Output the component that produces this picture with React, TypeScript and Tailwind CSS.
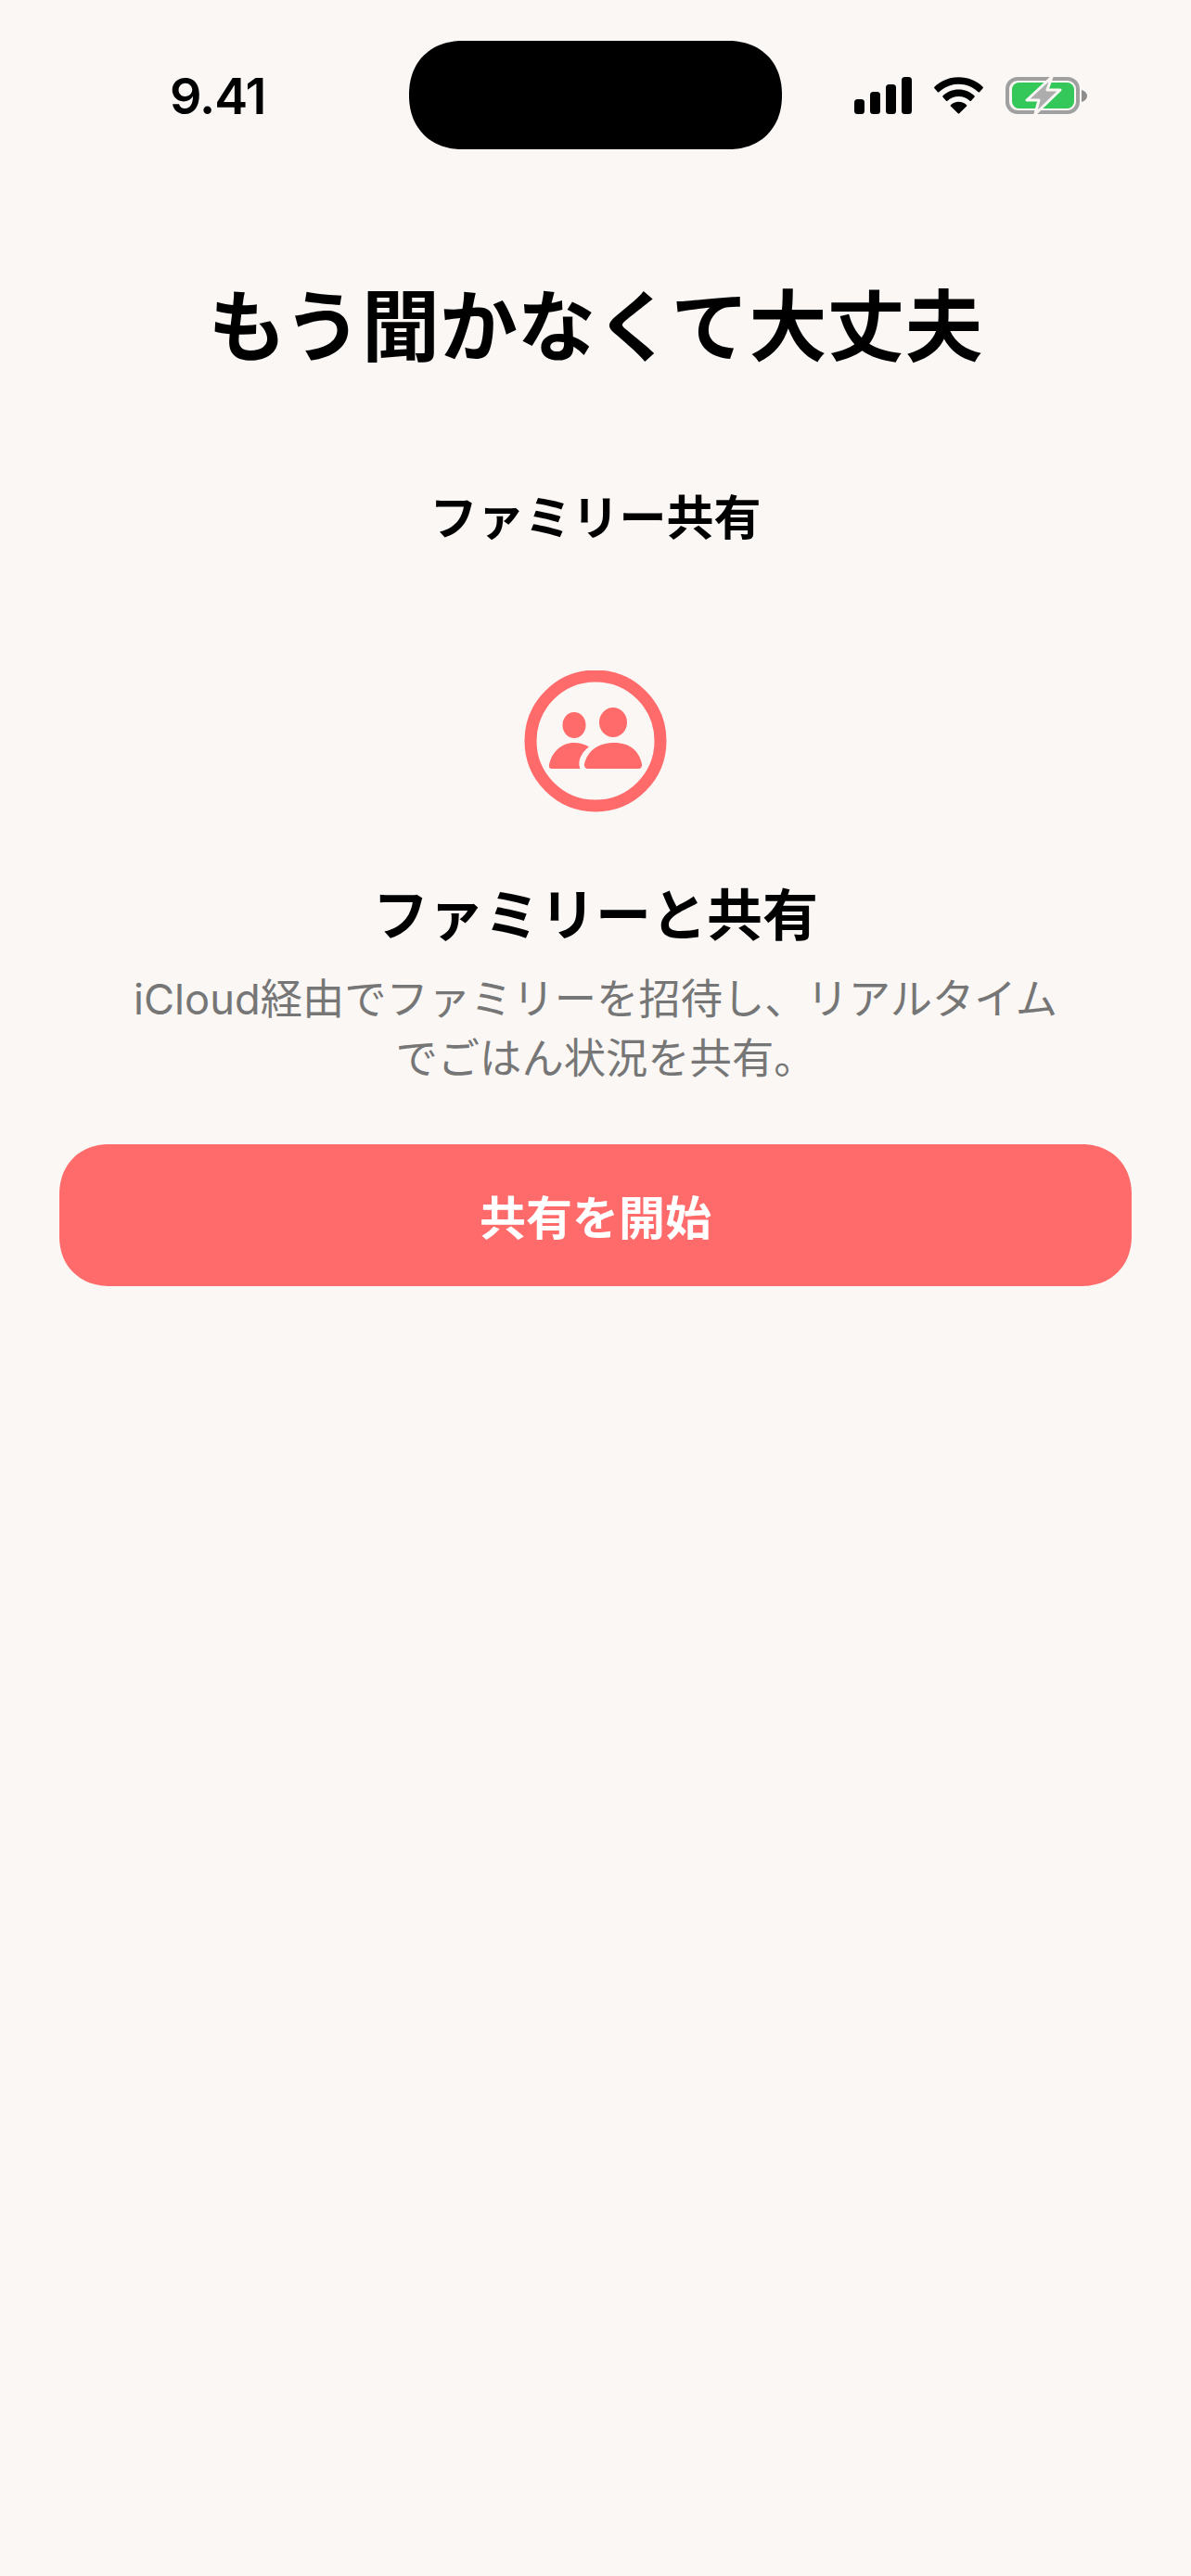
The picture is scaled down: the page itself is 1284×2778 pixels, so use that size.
const cjk = "font-['Noto_Sans_CJK_JP','Inter',sans-serif]";

function CellIcon() {
  return (
    <svg width="62" height="40" viewBox="0 0 62 40" fill="#000">
      <rect x="0" y="24" width="11" height="16" rx="3.5" />
      <rect x="17" y="16" width="11" height="24" rx="3.5" />
      <rect x="34" y="8" width="11" height="32" rx="3.5" />
      <rect x="51" y="0" width="11" height="40" rx="3.5" />
    </svg>
  );
}

function WifiIcon() {
  return (
    <svg width="53" height="40" viewBox="0 0 54 40" fill="#000">
      <path d="M27 0C16.5 0 7.2 4 0.4 10.6c-.4.4-.4 1 0 1.400l3.600 4.200c.4.4 1 .4 1.400 0C11 10.800 18.600 7.500 27 7.500s16 3.300 21.600 8.700c.4.4 1 .4 1.400 0l3.600-4.200c.4-.4.4-1 0-1.400C46.800 4 37.500 0 27 0z" />
      <path d="M27 13.500c-6.700 0-12.800 2.600-17.300 6.800-.4.4-.4 1 0 1.400l3.600 4.100c.4.4 1 .4 1.400 0 3.200-3 7.500-4.800 12.300-4.800s9.100 1.800 12.300 4.800c.4.4 1 .4 1.400 0l3.600-4.100c.4-.4.4-1 0-1.400C39.800 16.100 33.700 13.500 27 13.500z" />
      <path d="M27 27c-3.400 0-6.500 1.300-8.800 3.400-.4.4-.4 1 0 1.400l8.100 7.900c.4.4 1 .4 1.400 0l8.100-7.900c.4-.4.4-1 0-1.400C33.500 28.300 30.400 27 27 27z" />
    </svg>
  );
}

function BatteryIcon() {
  return (
    <svg width="88" height="42" viewBox="0 0 88 42">
      <rect x="2" y="3" width="76" height="36" rx="11" fill="none" stroke="#a0a0a0" strokeWidth="4" />
      <rect x="7" y="7" width="67" height="28" rx="7.500" fill="#34c759" />
      <path d="M82 15c3.500 1 6 3.500 6 6.500s-2.500 5.500-6 6.500z" fill="#8e8e8e" />
      <path
        d="M50 1 23 26h13l-4 15 27-26H45z"
        fill="#adadad"
        stroke="#faf7f5"
        strokeWidth="3"
        strokeLinejoin="round"
      />
    </svg>
  );
}

function FamilyIcon() {
  return (
    <svg width="154" height="154" viewBox="0 0 154 154">
      <circle cx="77" cy="76" r="70" fill="none" stroke="#ff6b6b" strokeWidth="13" />
      <ellipse cx="54" cy="59" rx="12.500" ry="14" fill="#ff6b6b" />
      <ellipse cx="96" cy="56" rx="15" ry="16" fill="#ff6b6b" />
      <path
        d="M30 106c-2.500 0-3.500-1.500-3-4 3-14 13-24 27-24 6 0 11.500 1.500 16 4.500-5.500 4-9.500 9.500-10.500 16-.3 2-.1 5 1 7.500z"
        fill="#ff6b6b"
      />
      <path
        d="M69 106c-2.500 0-4.500-2-4-5 3-13.500 14-23 32-23s27 9.500 30 23c.5 3-1.500 5-4 5z"
        fill="#ff6b6b"
      />
    </svg>
  );
}

export default function App() {
  return (
    <div className={`relative min-h-[2778px] w-full bg-[#faf7f5] ${cjk}`}>
      <div className="absolute left-[441px] top-[44px] h-[117px] w-[402px] rounded-[58px] bg-black [corner-shape:superellipse(1.12)]" />

      <div className="flex h-[208px] items-start justify-between pl-[183px] pr-[112px] pt-[76px]">
        <span className="font-['Inter',sans-serif] text-[54px] font-semibold leading-[56px] tracking-[-1px] text-black">
          9.41
        </span>
        <div className="flex items-center gap-[24px] pt-[6px]">
          <CellIcon />
          <WifiIcon />
          <BatteryIcon />
        </div>
      </div>

      <div className="flex flex-col items-center">
        <h1 className="mt-[87px] text-[84px] font-bold leading-[104px] text-black">
          もう聞かなくて大丈夫
        </h1>
        <h2 className="mt-[122px] text-[51px] font-bold leading-[68px] text-black">
          ファミリー共有
        </h2>
        <div className="mt-[134px]">
          <FamilyIcon />
        </div>
        <h3 className="mt-[66px] text-[60px] font-bold leading-[80px] text-black">
          ファミリーと共有
        </h3>
        <p className="mt-[23px] w-[1156px] text-center font-['Inter','Noto_Sans_CJK_JP',sans-serif] text-[45.3px] leading-[64px] text-[#767676]">
          iCloud経由でファミリーを招待し、リアルタイム
          <br />
          でごはん状況を共有<span className="-mr-[22px]">。</span>
        </p>
        <button className="mt-[60px] flex h-[153px] w-[1156px] items-center justify-center rounded-[54px] bg-[#ff6b6b] text-[50px] font-bold text-white [corner-shape:superellipse(1.1)]">
          共有を開始
        </button>
      </div>
    </div>
  );
}
